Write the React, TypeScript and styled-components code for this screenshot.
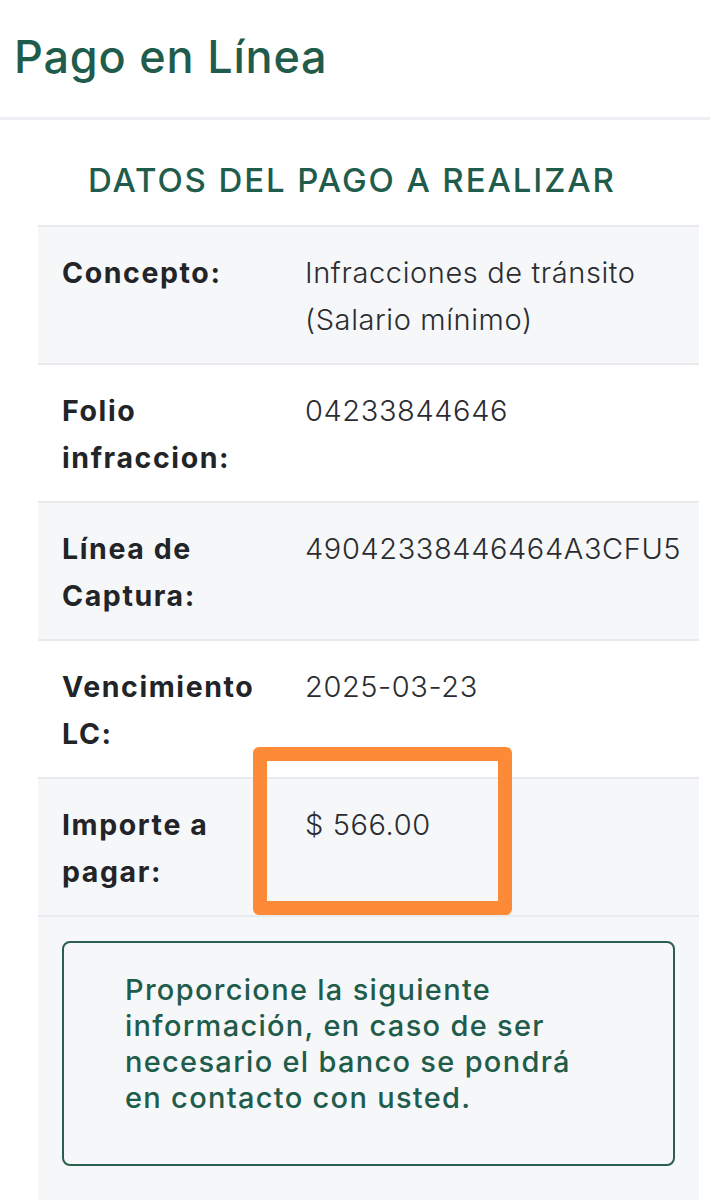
import React from "react";
import styled, { createGlobalStyle } from "styled-components";

const Global = createGlobalStyle`
  html, body { margin: 0; padding: 0; background: #ffffff; }
  body { font-family: Inter, "Open Sans", sans-serif; }
`;

const Page = styled.div`
  width: 710px;
  min-height: 1200px;
  background: #fff;
  overflow: hidden;
`;

const Header = styled.header`
  height: 117px;
  border-bottom: 3px solid #eceef1;
  display: flex;
  align-items: center;
  padding: 0 14px;
  box-sizing: content-box;
`;

const Title = styled.h1`
  margin: 0;
  margin-top: -4px;
  font-size: 45px;
  font-weight: 500;
  color: #1f5c4b;
  letter-spacing: 0.8px;
`;

const Content = styled.section`
  padding: 0 11px 0 38px;
`;

const SectionTitle = styled.h2`
  margin: 0;
  padding: 40px 0 0 50px;
  height: 65px;
  font-size: 33px;
  font-weight: 500;
  color: #1f5c4b;
  letter-spacing: 1.9px;
`;

const Table = styled.div`
  display: flex;
  flex-direction: column;
  border-top: 2px solid #e9eaed;
`;

const Row = styled.div<{ $striped: boolean }>`
  display: grid;
  grid-template-columns: 243px 1fr;
  padding: 22px 0 20px 24px;
  min-height: 94px;
  background: ${(p) => (p.$striped ? "#f6f7f9" : "#ffffff")};
  border-bottom: 2px solid #e9eaed;
`;

const Label = styled.div`
  font-size: 28.5px;
  line-height: 47px;
  font-weight: 700;
  color: #222428;
  letter-spacing: 1.6px;
  white-space: nowrap;
`;

const Value = styled.div`
  position: relative;
  font-size: 29px;
  line-height: 47px;
  font-weight: 300;
  color: #2a2c30;
  letter-spacing: 0.6px;
  white-space: nowrap;
`;

const Highlight = styled.div`
  position: absolute;
  left: -52px;
  top: -54px;
  width: 231px;
  height: 140px;
  border: 14px solid #fd8a36;
  border-radius: 6px;
  pointer-events: none;
`;

const Footer = styled.div`
  background: #f6f7f9;
  padding: 24px 24px 30px 24px;
  min-height: 260px;
`;

const Notice = styled.div`
  border: 2.5px solid #2a5e4d;
  border-radius: 8px;
  height: 225px;
  box-sizing: border-box;
  padding: 29px 20px 0 61px;
  font-size: 29px;
  line-height: 36px;
  font-weight: 500;
  color: #1f5c4b;
  letter-spacing: 1.3px;
  white-space: nowrap;
`;

const rows: { label: React.ReactNode; value: React.ReactNode; mark?: boolean }[] = [
  { label: "Concepto:", value: <>Infracciones de tránsito<br />(Salario mínimo)</> },
  { label: <>Folio<br />infraccion:</>, value: "04233844646" },
  { label: <>Línea de<br />Captura:</>, value: "49042338446464A3CFU5" },
  { label: <>Vencimiento<br />LC:</>, value: "2025-03-23" },
  { label: <>Importe a<br />pagar:</>, value: "$ 566.00", mark: true },
];

export default function App() {
  return (
    <Page>
      <Global />
      <Header>
        <Title>Pago en Línea</Title>
      </Header>
      <Content>
        <SectionTitle>DATOS DEL PAGO A REALIZAR</SectionTitle>
        <Table>
          {rows.map((r, i) => (
            <Row key={i} $striped={i % 2 === 0}>
              <Label>{r.label}</Label>
              <Value>
                {r.value}
                {r.mark && <Highlight />}
              </Value>
            </Row>
          ))}
        </Table>
        <Footer>
          <Notice>
            Proporcione la siguiente<br />
            información, en caso de ser<br />
            necesario el banco se pondrá<br />
            en contacto con usted.
          </Notice>
        </Footer>
      </Content>
    </Page>
  );
}
